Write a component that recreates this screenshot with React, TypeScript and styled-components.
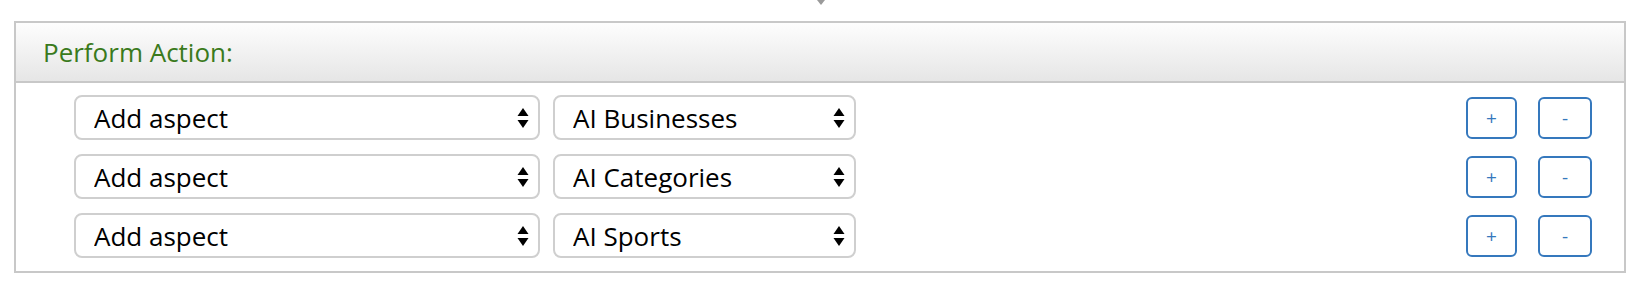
import React from 'react'
import styled, { createGlobalStyle } from 'styled-components'

const GlobalStyle = createGlobalStyle`
  html, body {
    margin: 0;
    padding: 0;
    background: #fff;
    font-family: 'Open Sans', 'Noto Sans', sans-serif;
  }
`

const Page = styled.div`
  width: 1642px;
  height: 293px;
  box-sizing: border-box;
  padding: 0 16px 0 14px;
`

const Connector = styled.div`
  height: 21px;
  display: flex;
  align-items: flex-start;
  padding-left: 802px;
`

const Panel = styled.div`
  border: 2px solid #c8c8c8;
`

const Header = styled.div`
  height: 58px;
  display: flex;
  align-items: center;
  padding-left: 27px;
  background: linear-gradient(to bottom, #fdfdfd 0%, #e6e6e6 100%);
  border-bottom: 2px solid #c8c8c8;
  color: #3a7a1c;
  font-size: 26px;
`

const Body = styled.div`
  padding: 12px 32px 13px 58px;
  display: flex;
  flex-direction: column;
  gap: 14px;
`

const Row = styled.div`
  display: flex;
  align-items: center;
  gap: 13px;
  height: 45px;
`

const SelectWrap = styled.div<{ $width: number }>`
  position: relative;
  width: ${(p) => p.$width}px;
  height: 45px;
`

const Select = styled.select`
  appearance: none;
  -webkit-appearance: none;
  width: 100%;
  height: 100%;
  box-sizing: border-box;
  border: 2px solid #cfcfcf;
  border-radius: 8px;
  background: #fff;
  padding: 0 36px 0 18px;
  font-family: 'Open Sans', 'Noto Sans', sans-serif;
  font-size: 26px;
  color: #000;
  outline: none;
`

const Arrows = styled.svg`
  position: absolute;
  right: 11px;
  top: 50%;
  margin-top: -10px;
  pointer-events: none;
`

const Spacer = styled.div`
  flex: 1;
`

const Buttons = styled.div`
  display: flex;
  gap: 21px;
`

const IconButton = styled.button<{ $width: number }>`
  width: ${(p) => p.$width}px;
  height: 42px;
  box-sizing: border-box;
  border: 2px solid #3578bd;
  border-radius: 6px;
  background: #fff;
  color: #3578bd;
  font-family: 'Open Sans', 'Noto Sans', sans-serif;
  font-size: 19px;
  padding: 0;
  cursor: pointer;
`

function Sorter() {
  return (
    <Arrows width="12" height="20" viewBox="0 0 12 20">
      <path d="M6 0 L11.5 8 L0.5 8 Z" fill="#000" />
      <path d="M0.5 12 L11.5 12 L6 20 Z" fill="#000" />
    </Arrows>
  )
}

const rows = ['AI Businesses', 'AI Categories', 'AI Sports']

export default function App() {
  return (
    <Page>
      <GlobalStyle />
      <Connector>
        <svg width="10" height="6" viewBox="0 0 10 6">
          <path d="M1 0 L9 0 L5 5 Z" fill="#9a9a9a" />
        </svg>
      </Connector>
      <Panel>
        <Header>Perform Action:</Header>
        <Body>
          {rows.map((target) => (
            <Row key={target}>
              <SelectWrap $width={466}>
                <Select defaultValue="add">
                  <option value="add">Add aspect</option>
                  <option value="remove">Remove aspect</option>
                </Select>
                <Sorter />
              </SelectWrap>
              <SelectWrap $width={303}>
                <Select defaultValue={target}>
                  {rows.map((r) => (
                    <option key={r} value={r}>
                      {r}
                    </option>
                  ))}
                </Select>
                <Sorter />
              </SelectWrap>
              <Spacer />
              <Buttons>
                <IconButton $width={51}>+</IconButton>
                <IconButton $width={54}>-</IconButton>
              </Buttons>
            </Row>
          ))}
        </Body>
      </Panel>
    </Page>
  )
}
